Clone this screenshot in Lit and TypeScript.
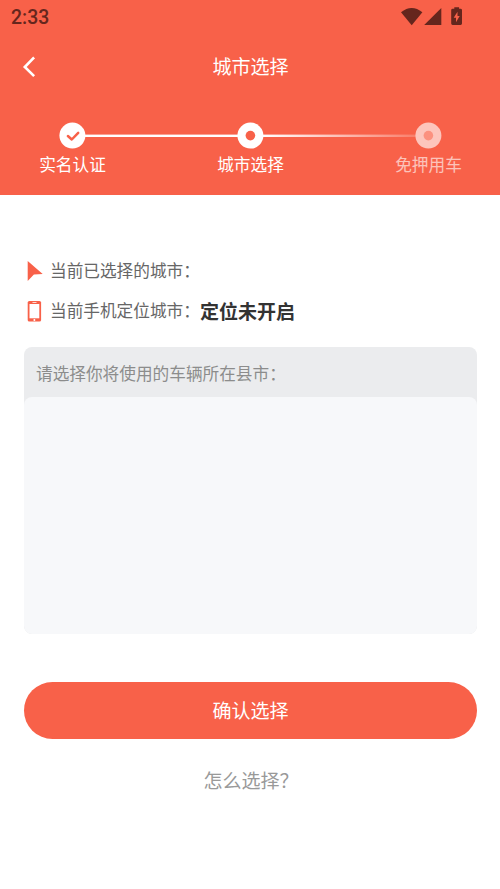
import { LitElement, html, css, svg } from "lit";
import { customElement, property } from "lit/decorators.js";

type StepState = "done" | "current" | "pending";

@customElement("step-item")
class StepItem extends LitElement {
  @property() label = "";
  @property() state: StepState = "pending";

  static styles = css`
    :host { display: flex; flex-direction: column; align-items: center; width: 90px; color: #fff; }
    :host([state="pending"]) .label { opacity: 0.62; }
    .dot { display: block; width: 28px; height: 28px; }
    .label { margin-top: 2px; padding-left: 1px; font-size: 16.67px; line-height: 25px; white-space: nowrap; }
  `;

  render() {
    const pending = this.state === "pending";
    return html`
      <svg class="dot" viewBox="0 0 28 28">
        <circle cx="14.4" cy="13.6" r="13" fill=${pending ? "#fdc5bc" : "#fff"} />
        ${this.state === "done"
          ? svg`<path d="M9.9 14 L13.8 17.5 L20.2 10.9" fill="none" stroke="#f86149" stroke-width="2.5" stroke-linecap="round" stroke-linejoin="round"/>`
          : svg`<circle cx="14.4" cy="13.6" r="4.8" fill=${pending ? "#fc917f" : "#f86149"} />`}
      </svg>
      <span class="label">${this.label}</span>
    `;
  }
}

@customElement("app-root")
class AppRoot extends LitElement {
  static styles = css`
    :host {
      display: block;
      height: 889px;
      background: #fff;
      overflow: hidden;
      font-family: "Noto Sans CJK SC", sans-serif;
    }
    svg { display: block; }
    .header { height: 195px; background: #f86149; color: #fff; }
    .status { display: flex; justify-content: space-between; height: 34px; color: #65261d; }
    .time { margin: 6px 0 0 11px; font: 500 19.4px/23px Roboto, sans-serif; }
    .nav { display: grid; grid-template-columns: 60px 1fr 60px; align-items: center; height: 66px; }
    .back { margin-left: 22px; }
    .title { padding: 0 0 2px 1px; text-align: center; font-size: 19.05px; line-height: 28px; }
    .steps { position: relative; display: flex; justify-content: space-between; margin: 22px 27px 0; }
    .track { position: absolute; left: 45px; top: 12px; }
    step-item { position: relative; }
    .main { padding: 56px 23px 0 24px; }
    .row { display: flex; align-items: center; height: 40px; font-size: 16.67px; color: #666; }
    .row span, .row strong { padding-bottom: 2px; }
    .row svg { width: 22px; margin-right: 4px; }
    .row strong { color: #333; font-size: 19.05px; font-weight: 700; }
    .panel { height: 287px; margin-top: 16px; border-radius: 8px; background: #ebecee; overflow: hidden; }
    .hint { height: 50px; padding-left: 12px; box-sizing: border-box; font-size: 16.67px; line-height: 53px; color: #8c8c8c; }
    .list { height: 237px; border-radius: 8px; background: #f7f8fa; }
    .confirm {
      display: block;
      width: 100%;
      height: 57px;
      margin-top: 48px;
      padding: 0 0 2px;
      border: 0;
      border-radius: 29px;
      background: #f86149;
      color: #fff;
      font: 19.05px/55px "Noto Sans CJK SC", sans-serif;
    }
    .help { margin-top: 27px; padding-left: 1px; text-align: center; font-size: 19.05px; line-height: 28px; color: #999; }
  `;

  render() {
    return html`
      <header class="header">
        <div class="status">
          <span class="time">2:33</span>
          <svg width="100" height="34" viewBox="400 0 100 34" fill="currentColor">
            <path d="M401 12.2 Q411.7 3.6 422.4 12.2 L411.7 25.2 Z" />
            <path d="M441.3 8 V25 H424.2 Z" />
            <path d="M454.3 7.2 h4.8 v1.6 h1.5 q1.4 0 1.4 1.4 v13.4 q0 1.4 -1.4 1.4 h-8 q-1.4 0 -1.4 -1.4 v-13.4 q0 -1.4 1.4 -1.4 h1.7 Z" />
            <path d="M457.5 11.7 L453.7 17.8 H456 V22.3 L459.7 15.9 H457.5 Z" fill="#f86149" />
          </svg>
        </div>
        <nav class="nav">
          <svg class="back" width="16" height="22" viewBox="0 0 16 22">
            <path d="M11.2 2.4 L2.8 11 L11.2 19.2" fill="none" stroke="#fff" stroke-width="2.6" stroke-linecap="square" />
          </svg>
          <span class="title">城市选择</span>
        </nav>
        <div class="steps">
          <svg class="track" width="356" height="4" viewBox="0 0 356 4">
            <defs>
              <linearGradient id="fade">
                <stop offset="0.54" stop-color="#fff" />
                <stop offset="0.97" stop-color="#fff" stop-opacity="0.18" />
              </linearGradient>
            </defs>
            <rect x="0" y="0.6" width="356" height="2.4" fill="url(#fade)" />
          </svg>
          <step-item state="done" label="实名认证"></step-item>
          <step-item state="current" label="城市选择"></step-item>
          <step-item state="pending" label="免押用车"></step-item>
        </div>
      </header>
      <main class="main">
        <div class="row">
          <svg height="22" viewBox="0 0 22 22"><path d="M3.7 1 L18.7 14 L9.9 14.6 L3.7 21 Z" fill="#f86149" /></svg>
          <span>当前已选择的城市：</span>
        </div>
        <div class="row">
          <svg height="22" viewBox="0 0 22 22">
            <rect x="3.7" y="0.9" width="13.4" height="20.7" rx="1.6" fill="#f86149" />
            <rect x="5.5" y="4" width="9.8" height="14.3" fill="#fff" />
            <rect x="8.4" y="1.9" width="4.2" height="0.9" rx="0.4" fill="#fff" />
            <circle cx="10.4" cy="20" r="1" fill="#fff" />
          </svg>
          <span>当前手机定位城市：</span><strong>定位未开启</strong>
        </div>
        <section class="panel">
          <div class="hint">请选择你将使用的车辆所在县市：</div>
          <div class="list"></div>
        </section>
        <button class="confirm">确认选择</button>
        <div class="help">怎么选择？</div>
      </main>
    `;
  }
}
